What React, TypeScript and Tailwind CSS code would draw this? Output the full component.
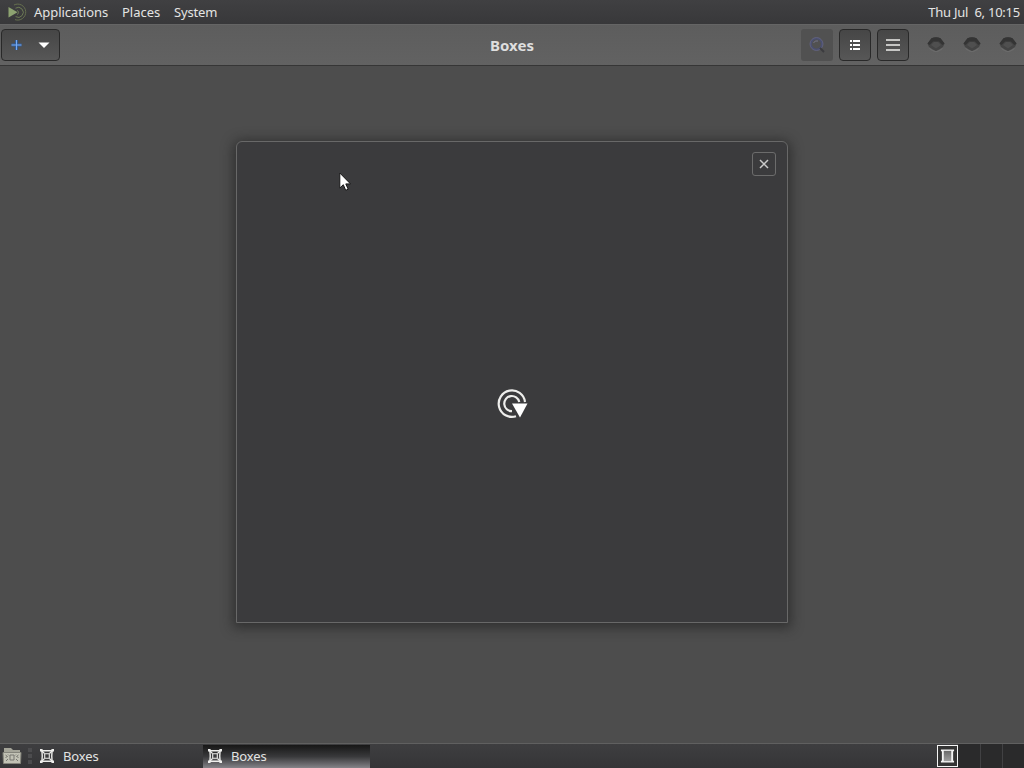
import { useState } from 'react';

const MateLogo = () => (
  <svg width="20" height="20" viewBox="0 0 20 20" fill="none">
    <path d="M7 3A8 8 0 1 1 8 17.6" stroke="#66704f" strokeWidth="1" />
    <path d="M8.5 6.2A5 5 0 1 1 8.6 14.6" stroke="#6d7b55" strokeWidth="1" />
    <path d="M10 8.5A2 2 0 0 1 10 12.4" stroke="#6d7b55" strokeWidth="1" />
    <path d="M1.5 5 10.5 10.3 1.5 15.5Z" fill="#8da371" />
  </svg>
);

const BoxesIcon = () => (
  <svg width="14" height="14" viewBox="0 0 14 14" fill="none" stroke="#eeeeec">
    <path d="M1.5 1.7H12.5M1.5 12.3H12.5M1.9 1.5Q2.6 7 1.9 12.5M12.1 1.5Q11.4 7 12.1 12.5" strokeWidth="1.4" />
    <path d="M4.7 4.7h4.6v4.6H4.7z" strokeWidth="1.1" />
    <path d="M1.5 1.5l3 3M12.5 1.5l-3 3M12.5 12.5l-3-3M1.5 12.5l3-3" strokeWidth="1.1" />
    <path d="M0 0h2.6v2.6H0zM11.4 0H14v2.6h-2.6zM0 11.4h2.6V14H0zM11.4 11.4H14V14h-2.6z" fill="#eeeeec" stroke="none" />
  </svg>
);

const FolderIcon = () => (
  <svg width="20" height="18" viewBox="0 0 20 18">
    <path d="M2 1h7l2 2h7v4H2z" fill="#a5a599" />
    <path d="M1 5.5h18L18.5 16.5h-17z" fill="#c2c2b5" stroke="#85857c" strokeWidth="1" />
    <path d="M8 8h4v5H8zM3.5 8l2 1.5-2 1M16.5 8l-2 1.5 2 1M4 14l2-2M16 14l-2-2M6 7.5l1 1M14 7.5l-1 1" fill="none" stroke="#777770" strokeWidth="1" />
  </svg>
);

const WindowButton = () => (
  <svg width="20" height="18" viewBox="0 0 20 18">
    <path d="M1.5 7.5 5.5 2.2Q10 .2 14.5 2.2L18.5 7.5 17 11 10 15.5 3 11z" fill="#444" />
    <path d="M1.5 7.5 5.5 2.2Q10 .2 14.5 2.2L18.5 7.5 16.5 9 13 5.5H7L3.5 9z" fill="#343434" />
    <path d="M5 9 8 6h4l3 3-5 3.5z" fill="#4f4f4f" />
    <path d="M3.5 12.5Q10 18.5 16.5 12.5" fill="none" stroke="#6e6e6e" strokeWidth="1" />
  </svg>
);

const Spinner = () => (
  <svg width="32" height="32" viewBox="0 0 32 32" fill="none" stroke="#eeeeec">
    <path d="M29 14A13.2 13.2 0 1 0 20 28.2" strokeWidth="2.2" />
    <path d="M23.3 14A7.6 7.6 0 1 0 16 23.2" strokeWidth="2.2" />
    <path d="M16 15.5h15.5L24 29.5z" fill="#fff" stroke="none" />
  </svg>
);

const Cursor = () => (
  <svg width="13" height="20" viewBox="0 0 13 20">
    <path d="M.8 1v15l3.5-3.3 2.4 5.6 2.5-1.1-2.4-5.3h4.7z" fill="#fff" stroke="#161616" strokeWidth="1" />
  </svg>
);

const buttonStyle = "h-8 rounded-[4px] border border-[#292929] bg-linear-to-b from-[#464646] to-[#575757] flex items-center justify-center";

const TopPanel = () => (
  <div className="h-6 bg-linear-to-b from-[#404042] to-[#38383a] flex items-center pl-[7px] pr-[4px] text-[#e4e4e3] text-[13px] whitespace-pre">
    <MateLogo />
    <span className="ml-[7px] w-[88px] pt-px tracking-[-0.05px]">Applications</span>
    <span className="w-[52px] pt-px">Places</span>
    <span className="pt-px tracking-[-0.15px]">System</span>
    <span className="ml-auto pt-px tracking-[-0.24px]">Thu Jul  6, 10:15</span>
  </div>
);

const HeaderBar = () => (
  <div className="h-[42px] bg-linear-to-b from-[#5d5d5d] to-[#626262] border-t border-b border-t-[#656565] border-b-[#363636] grid grid-cols-3 items-center">
    <div className="pl-px">
      <div className={`${buttonStyle} w-[59px]`}>
        <svg width="57" height="30" viewBox="0 0 57 30">
          <path d="M14.5 10v10M9.5 15h10" stroke="#315c99" strokeWidth="3" />
          <path d="M14.5 10v10M9.5 15h10" stroke="#78aaf0" strokeWidth="1" />
          <path d="M36.5 12.5h11L42 18z" fill="#fff" />
        </svg>
      </div>
    </div>
    <h1 className="text-center text-[15px] font-bold text-[#dedede]">Boxes</h1>
    <div className="flex items-center justify-end pr-[6px]">
      <div className="w-8 h-8 mr-[6px] rounded-[3px] bg-[#515151] flex items-center justify-center">
        <svg width="18" height="18" viewBox="0 0 18 18" fill="none">
          <circle cx="8.5" cy="8" r="5.5" stroke="#4b5070" strokeWidth="2" />
          <circle cx="8.5" cy="8" r="6.5" stroke="#68698a" strokeWidth=".7" />
          <path d="M5.5 7Q7 4 10 5" stroke="#77778b" />
          <path d="m12 12 4 4" stroke="#3c3c3f" strokeWidth="2" />
        </svg>
      </div>
      <div className={`${buttonStyle} w-8 mr-[6px]`}>
        <svg width="12" height="12" viewBox="0 0 12 12" fill="#fff">
          <path d="M1 1h2v2H1zM4 1h7v2H4zM1 5h2v2H1zM4 5h7v2H4zM1 9h2v2H1zM4 9h7v2H4z" />
        </svg>
      </div>
      <div className={`${buttonStyle} w-8`}>
        <svg width="14" height="12" viewBox="0 0 14 12" stroke="#eeeeec" strokeWidth="1.5">
          <path d="M0 1h14M0 6h14M0 11h14" />
        </svg>
      </div>
      <div className="ml-[17px] flex gap-4">
        <WindowButton />
        <WindowButton />
        <WindowButton />
      </div>
    </div>
  </div>
);

const BottomPanel = ({ active, onSelect }: { active: number; onSelect: (index: number) => void }) => (
  <div className="h-[25px] border-t border-[#606060] bg-linear-to-b from-[#3e3e40] to-[#353537] flex items-center text-[13px] text-[#e4e4e3]">
    <div className="w-[35px] flex items-center pl-[2px] gap-[6px]">
      <FolderIcon />
      <div className="flex flex-col gap-[2px]">
        <i className="w-1 h-1 bg-[#4c4c4e]" />
        <i className="w-1 h-1 bg-[#4c4c4e]" />
        <i className="w-1 h-1 bg-[#4c4c4e]" />
      </div>
    </div>
    {[0, 1].map((index) => (
      <button
        key={index}
        onClick={() => onSelect(index)}
        className={`h-[23px] flex items-center gap-[9px] pl-[5px] ${index === active ? "w-[167px] bg-linear-to-b from-[#171717] via-[#39393b] to-[#858489]" : "w-[168px]"}`}
      >
        <BoxesIcon />
        <span className="pt-px tracking-[-0.15px]">Boxes</span>
      </button>
    ))}
    <div className="ml-auto flex h-full items-center">
      <div className="w-[21px] h-[22px] border border-[#f4f4f4] bg-[#343434] flex items-center justify-center">
        <svg width="15" height="16" viewBox="0 0 16 16">
          <defs>
            <linearGradient id="window" x1="0" y1="0" x2="0" y2="1">
              <stop stopColor="#696969" />
              <stop offset="1" stopColor="#a0a0a0" />
            </linearGradient>
          </defs>
          <path d="M1 1h14v2h-1v10h1v2H1v-2h1V3H1z" fill="#f4f4f4" />
          <path d="M4 2.5h8v11H4z" fill="url(#window)" />
        </svg>
      </div>
      <div className="w-[23px] h-full bg-[#2a2a2b] border-r border-[#414143]" />
      <div className="w-[22px] h-full bg-[#2a2a2b] border-r border-[#414143]" />
      <div className="w-[21px] h-full bg-[#2a2a2b]" />
    </div>
  </div>
);

const App = () => {
  const [active, setActive] = useState(1);

  return (
    <div className="relative w-[1024px] h-[768px] overflow-hidden flex flex-col bg-[#4d4d4d] font-['Noto_Sans',sans-serif]">
      <TopPanel />
      <HeaderBar />
      <main className="flex-1 flex justify-center pt-[75px]">
        <section className="w-[552px] h-[482px] border border-[#686868] rounded-t-[6px] bg-[#3b3b3d] shadow-[0_2px_12px_3px_rgba(30,30,30,0.6)] flex flex-col">
          <div className="flex justify-end pt-[10px] pr-[11px]">
            <button aria-label="Close" className="w-6 h-6 border border-[#6c6c6c] rounded-[3px] flex items-center justify-center">
              <svg width="10" height="10" viewBox="0 0 10 10" stroke="#cacaca" strokeWidth="1.5">
                <path d="m1 1 8 8M9 1 1 9" />
              </svg>
            </button>
          </div>
          <div className="flex-1 flex justify-center pt-[212px]">
            <Spinner />
          </div>
        </section>
      </main>
      <BottomPanel active={active} onSelect={setActive} />
      <div className="absolute left-[339px] top-[172px]">
        <Cursor />
      </div>
    </div>
  );
};

export default App;
